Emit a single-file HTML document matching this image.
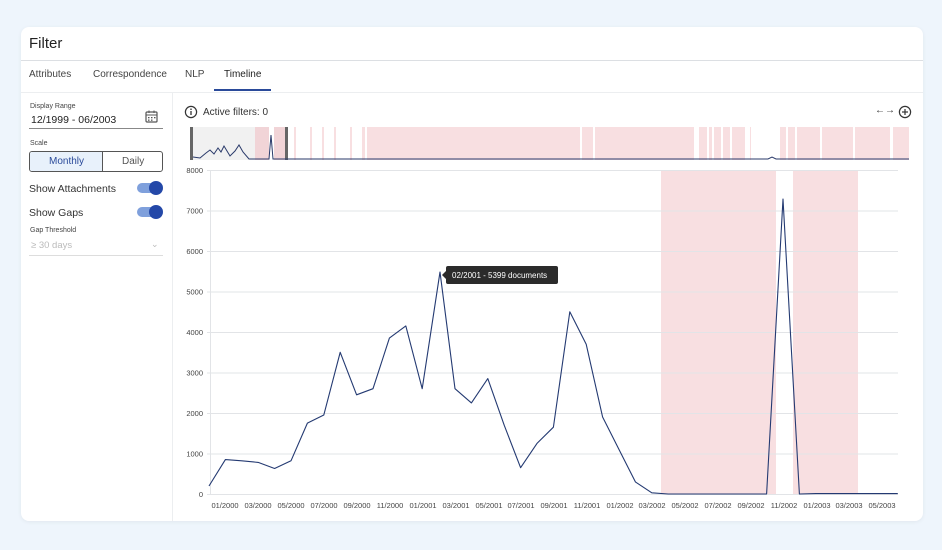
<!DOCTYPE html>
<html><head><meta charset="utf-8"><style>
*{margin:0;padding:0;box-sizing:border-box}
body{width:942px;height:550px;background:#eef5fc;font-family:"Liberation Sans",sans-serif;position:relative;overflow:hidden;color:#222}
.card{position:absolute;left:21px;top:27px;width:902px;height:494px;background:#fff;border-radius:8px;box-shadow:0 1px 4px rgba(0,0,0,.06)}
.t{position:absolute;white-space:nowrap}
</style></head><body>
<div class="card"></div>
<div class="t" style="left:29px;top:35px;font-size:15px;color:#222">Filter</div>
<div style="position:absolute;left:21px;top:60px;width:902px;height:1px;background:#dcdfe3"></div>
<div class="t" style="left:29px;top:69px;font-size:10px;color:#444">Attributes</div>
<div class="t" style="left:93px;top:69px;font-size:10px;color:#444">Correspondence</div>
<div class="t" style="left:185px;top:69px;font-size:10px;color:#444">NLP</div>
<div class="t" style="left:224px;top:69px;font-size:10px;color:#222">Timeline</div>
<div style="position:absolute;left:214px;top:89px;width:57px;height:2px;background:#2a4a9a"></div>
<div style="position:absolute;left:21px;top:92px;width:902px;height:1px;background:#eceef0"></div>
<div style="position:absolute;left:172px;top:93px;width:1px;height:428px;background:#eceef0"></div>

<div class="t" style="left:30px;top:103px;font-size:7px;color:#444">Display Range</div>
<div class="t" style="left:31px;top:114px;font-size:10.5px;color:#222">12/1999 - 06/2003</div>
<svg style="position:absolute;left:145px;top:110px" width="13" height="13" viewBox="0 0 13 13"><rect x="1" y="2" width="11" height="10" rx="1" fill="none" stroke="#555" stroke-width="1.2"/><line x1="1" y1="5" x2="12" y2="5" stroke="#555"/><line x1="4" y1="0.5" x2="4" y2="3" stroke="#555"/><line x1="9" y1="0.5" x2="9" y2="3" stroke="#555"/><g fill="#555"><rect x="3" y="7" width="1.5" height="1.3"/><rect x="6" y="7" width="1.5" height="1.3"/><rect x="9" y="7" width="1.5" height="1.3"/><rect x="3" y="9.5" width="1.5" height="1.3"/><rect x="6" y="9.5" width="1.5" height="1.3"/></g></svg>
<div style="position:absolute;left:29px;top:128px;width:134px;height:1px;background:#888"></div>
<div class="t" style="left:30px;top:140px;font-size:7px;color:#444">Scale</div>
<div style="position:absolute;left:29px;top:151px;width:134px;height:21px;border:1px solid #555;border-radius:3px;overflow:hidden">
<div style="position:absolute;left:0;top:0;width:73px;height:19px;background:#e8f1fb;border-right:1px solid #555"></div>
<div class="t" style="left:19px;top:4px;font-size:10px;color:#2a4a9a">Monthly</div>
<div class="t" style="left:92px;top:4px;font-size:10px;color:#555">Daily</div></div>
<div class="t" style="left:29px;top:183px;font-size:10.5px;color:#333">Show Attachments</div>
<div style="position:absolute;left:137px;top:183px;width:24px;height:10px;border-radius:5px;background:#7fa0dc"></div>
<div style="position:absolute;left:149px;top:181px;width:14px;height:14px;border-radius:7px;background:#2448a8"></div>
<div class="t" style="left:29px;top:207px;font-size:10.5px;color:#333">Show Gaps</div>
<div style="position:absolute;left:137px;top:207px;width:24px;height:10px;border-radius:5px;background:#7fa0dc"></div>
<div style="position:absolute;left:149px;top:205px;width:14px;height:14px;border-radius:7px;background:#2448a8"></div>
<div class="t" style="left:30px;top:227px;font-size:7px;color:#444">Gap Threshold</div>
<div class="t" style="left:31px;top:240px;font-size:9.5px;color:#bbb">≥ 30 days</div>
<div class="t" style="left:151px;top:239px;font-size:9px;color:#bbb">⌄</div>
<div style="position:absolute;left:29px;top:255px;width:134px;height:1px;background:#ddd"></div>

<svg style="position:absolute;left:184px;top:105px" width="14" height="14" viewBox="0 0 14 14"><circle cx="7" cy="7" r="5.6" fill="none" stroke="#333" stroke-width="1.2"/><line x1="7" y1="6" x2="7" y2="10" stroke="#333" stroke-width="1.3"/><circle cx="7" cy="4.2" r=".8" fill="#333"/></svg>
<div class="t" style="left:203px;top:107px;font-size:10px;color:#333">Active filters: 0</div>
<div class="t" style="left:875px;top:105px;font-size:10px;color:#333">←→</div>
<svg style="position:absolute;left:898px;top:105px" width="14" height="14" viewBox="0 0 14 14"><circle cx="7" cy="7" r="5.6" fill="none" stroke="#333" stroke-width="1.2"/><line x1="7" y1="4" x2="7" y2="10" stroke="#333" stroke-width="1.2"/><line x1="4" y1="7" x2="10" y2="7" stroke="#333" stroke-width="1.2"/></svg>

<svg style="position:absolute;left:0;top:0" width="942" height="550">
<g fill="#f8dfe1">
<rect x="191" y="127" width="64" height="33" fill="#f1f1f1"/>
<rect x="255" y="127" width="14" height="33" fill="#f1d4d7"/>
<rect x="274" y="127" width="11" height="33" fill="#f1d4d7"/>
<rect x="294" y="127" width="2" height="33"/><rect x="310" y="127" width="2" height="33"/><rect x="322" y="127" width="2" height="33"/><rect x="334" y="127" width="2" height="33"/><rect x="350" y="127" width="2" height="33"/><rect x="362" y="127" width="3" height="33"/>
<rect x="367" y="127" width="213" height="33"/>
<rect x="582" y="127" width="11" height="33"/>
<rect x="595" y="127" width="99" height="33"/>
<rect x="699" y="127" width="8" height="33"/><rect x="709" y="127" width="3" height="33"/><rect x="714" y="127" width="7" height="33"/><rect x="723" y="127" width="7" height="33"/><rect x="732" y="127" width="13" height="33"/><rect x="750" y="127" width="1" height="33"/>
<rect x="780" y="127" width="6" height="33"/><rect x="788" y="127" width="7" height="33"/><rect x="797" y="127" width="23" height="33"/><rect x="822" y="127" width="31" height="33"/><rect x="855" y="127" width="35" height="33"/><rect x="893" y="127" width="16" height="33"/>
<rect x="661" y="170" width="115" height="324"/>
<rect x="793" y="170" width="65" height="324"/>
</g>
<rect x="190" y="127" width="3" height="33" fill="#666"/>
<rect x="285" y="127" width="3" height="33" fill="#666"/>
<polyline fill="none" stroke="#2a3a6a" stroke-width="1" points="193,157 200,158 206,153 210,150 214,154 218,148 221,152 224,146 227,151 230,156 235,151 239,145 243,152 249,159 269,159 271,135 273,159 768,159 772,157 776,159 909,159"/>
<g stroke="#e2e4e7" stroke-width="1">
<line x1="207" y1="170.5" x2="898" y2="170.5"/><line x1="207" y1="211" x2="898" y2="211"/><line x1="207" y1="251.5" x2="898" y2="251.5"/><line x1="207" y1="292" x2="898" y2="292"/><line x1="207" y1="332.5" x2="898" y2="332.5"/><line x1="207" y1="373" x2="898" y2="373"/><line x1="207" y1="413.5" x2="898" y2="413.5"/><line x1="207" y1="454" x2="898" y2="454"/><line x1="207" y1="494.5" x2="898" y2="494.5"/>
<line x1="210.5" y1="170" x2="210.5" y2="494"/>
</g>
<g font-family="Liberation Sans" font-size="7.5" fill="#444" text-anchor="end">
<text x="203" y="173">8000</text><text x="203" y="213.5">7000</text><text x="203" y="254">6000</text><text x="203" y="294.5">5000</text><text x="203" y="335">4000</text><text x="203" y="375.5">3000</text><text x="203" y="416">2000</text><text x="203" y="456.5">1000</text><text x="203" y="497">0</text>
</g>
<g font-family="Liberation Sans" font-size="7.5" fill="#444" text-anchor="middle">
<text x="225" y="508">01/2000</text><text x="258" y="508">03/2000</text><text x="291" y="508">05/2000</text><text x="324" y="508">07/2000</text><text x="357" y="508">09/2000</text><text x="390" y="508">11/2000</text><text x="423" y="508">01/2001</text><text x="456" y="508">03/2001</text><text x="489" y="508">05/2001</text><text x="521" y="508">07/2001</text><text x="554" y="508">09/2001</text><text x="587" y="508">11/2001</text><text x="620" y="508">01/2002</text><text x="652" y="508">03/2002</text><text x="685" y="508">05/2002</text><text x="718" y="508">07/2002</text><text x="751" y="508">09/2002</text><text x="784" y="508">11/2002</text><text x="817" y="508">01/2003</text><text x="849" y="508">03/2003</text><text x="882" y="508">05/2003</text>
</g>
<polyline fill="none" stroke="#243a72" stroke-width="1.1" stroke-linejoin="round" points="209,486 225.4,459.6 241.8,460.8 258.2,462.4 274.6,468.5 291,460.8 307.4,423.1 323.8,415 340.2,352.3 356.6,394.8 373,388.7 389.4,338.1 405.8,325.9 422.2,388.7 440,272 455,388.7 471.4,402.9 487.8,378.6 504.2,425.2 520.6,467.7 537,443.4 553.4,427.2 569.8,311.8 586.2,344.2 602.6,417 619,449.5 635.4,481.9 651.8,492.8 668.2,494 766.6,494 783,199 799.4,494 815.8,493.6 897.8,493.6"/>
<rect x="446" y="266" width="112" height="18" rx="2" fill="#2b2b2b"/>
<polygon points="446,271 442,275 446,279" fill="#2b2b2b"/>
<text x="452" y="278" font-family="Liberation Sans" font-size="8" fill="#fff">02/2001 - 5399 documents</text>
</svg>
</body></html>
